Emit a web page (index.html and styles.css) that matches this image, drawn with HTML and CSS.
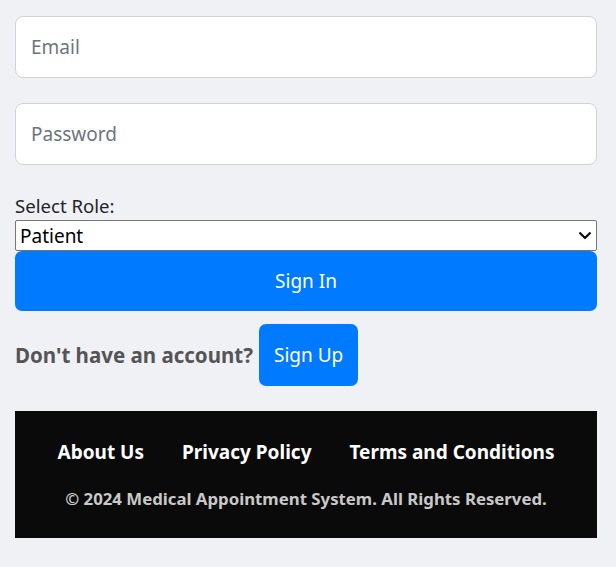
FILE: index.html
```html
<!DOCTYPE html>
<html lang="en">
<head>
<meta charset="utf-8">
<title>Sign In</title>
<link rel="stylesheet" href="styles.css">
</head>
<body>
<main class="page">
  <form class="login-form">
    <input class="text-input" type="email" placeholder="Email">
    <input class="text-input" type="password" placeholder="Password">
    <label class="role-label" for="role">Select Role:</label>
    <div class="select-wrap">
      <select class="role-select" id="role">
        <option>Patient</option>
        <option>Doctor</option>
        <option>Admin</option>
      </select>
      <svg class="select-arrow" width="12" height="8" viewBox="0 0 12 8" aria-hidden="true">
        <path d="M1.2 1.2 L6 6 L10.8 1.2" fill="none" stroke="#111" stroke-width="2.3" stroke-linecap="round" stroke-linejoin="round"/>
      </svg>
    </div>
    <button class="btn btn-block" type="button">Sign In</button>
  </form>
  <div class="signup-row">
    <span class="signup-text">Don't have an account?</span>
    <button class="btn btn-small" type="button">Sign Up</button>
  </div>
  <footer class="site-footer">
    <nav class="footer-links">
      <a href="#">About Us</a>
      <a href="#">Privacy Policy</a>
      <a href="#">Terms and Conditions</a>
    </nav>
    <p class="copyright">© 2024 Medical Appointment System. All Rights Reserved.</p>
  </footer>
</main>
</body>
</html>
```
FILE: styles.css
```css
* { box-sizing: border-box; }
html, body {
  margin: 0;
  background: #f0f1f5;
}
body {
  font-family: "Noto Sans", "Open Sans", sans-serif;
  color: #212529;
}
.page {
  padding: 16px 19px 0 15px;
}
.login-form {
  display: flex;
  flex-direction: column;
}
.text-input {
  height: 62px;
  border: 1px solid #ced4da;
  border-radius: 8px;
  background: #fff;
  padding: 0 15px;
  font-family: inherit;
  font-size: 19px;
  color: #495057;
  margin-bottom: 25px;
}
.text-input::placeholder { color: #6c757d; }
.role-label {
  font-size: 18.6px;
  line-height: 24px;
  margin-top: 4px;
  margin-bottom: 2px;
}
.select-wrap {
  position: relative;
  display: flex;
}
.role-select {
  flex: 1;
  height: 31px;
  font-family: inherit;
  font-size: 19px;
  color: #000;
  background: #fff;
  border: 1px solid #767676;
  border-radius: 2px;
  padding: 0 24px 0 4px;
  appearance: none;
  -webkit-appearance: none;
}
.select-arrow {
  position: absolute;
  right: 6px;
  top: 12px;
  pointer-events: none;
}
.btn {
  background: #007bff;
  color: #fff;
  border: none;
  border-radius: 7px;
  font-family: inherit;
  font-size: 19px;
  cursor: pointer;
}
.btn-block {
  height: 60px;
}
.signup-row {
  display: flex;
  align-items: center;
  gap: 6px;
  margin-top: 13px;
}
.signup-text {
  font-weight: 700;
  font-size: 20.5px;
  color: #555;
}
.btn-small {
  height: 62px;
  padding: 0 15px;
}
.site-footer {
  margin-top: 25px;
  background: #0a0a0a;
  height: 127px;
  display: flex;
  flex-direction: column;
  align-items: center;
  padding-top: 28px;
}
.footer-links {
  display: flex;
  gap: 38px;
}
.footer-links a {
  color: #fff;
  text-decoration: none;
  font-weight: 700;
  font-size: 19px;
  line-height: 26px;
}
.copyright {
  margin: 23px 0 0;
  color: #c8c8c8;
  font-weight: 700;
  font-size: 16.8px;
  line-height: 22px;
}
```
